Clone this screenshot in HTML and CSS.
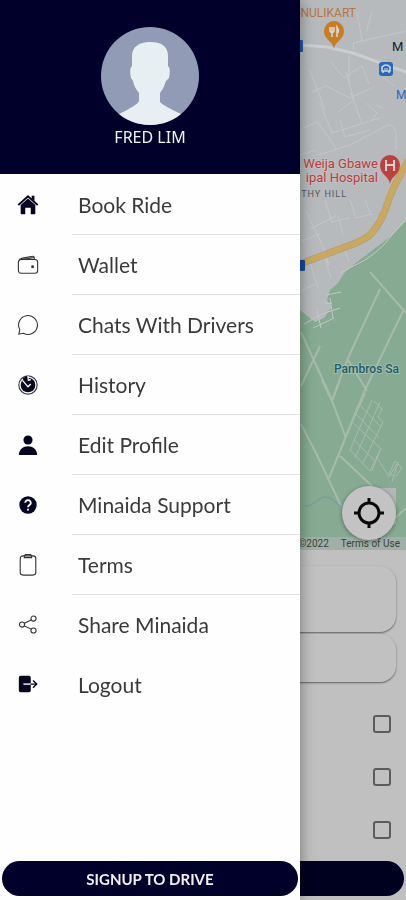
FILE: index.html
```html
<!DOCTYPE html>
<html lang="en">
<head>
    <meta charset="UTF-8">
    <meta name="viewport" content="width=device-width, initial-scale=1.0">
    <title>Minaida</title>

    <link rel="stylesheet" href="styles.css">
</head>
<body>
    <main class="page">
        <div class="map">
            <svg class="map-art" viewBox="0 0 406 550" preserveAspectRatio="xMaxYMin slice">
                <rect width="406" height="550" fill="#b7babc"/>
                <!-- park -->
                <path d="M406 221L390 237L374 249L357 262L345 272L338 283L330 290L327 300L332 307L324 318L315 322L300 310L0 310V550H406Z" fill="#86ab92"/>
                <!-- small streets -->
                <g fill="none" stroke="#c4c7c8" stroke-width="1">
                    <path d="M354 50L353 43L406 31M357 12L362 40M366 32L372 12M303 128L318 122L337 150M312 92L326 86L350 98L372 88M330 61L344 78L362 66L369 84M346 72L354 100L338 112M320 103L332 133L380 118M351 93L362 124M366 103L377 113L372 120M376 105L383 108M340 120L345 137L370 130M310 70L325 110M318 155L350 145L388 125Q396 124 396 136V150M349 55V82M384 78L394 86M300 155L316 150"/>
                    <path d="M302 241L320 234M306 211L324 249L329 266M310 229L336 216M325 200L332 222L350 218M350 200L356 218L372 214M338 216L343 235M365 200L371 215M300 292L315 284M310 262L318 288M325 258L331 278M345 250L349 262"/>
                    <path d="M304 324L322 314L340 308M313 328L334 318M326 295L341 292M324 304L332 303M317 310L321 328M330 298L333 318M340 273L365 260Q382 249 391 236L406 219"/>
                </g>
                <!-- paths in the park -->
                <g fill="none" stroke="#a7bbaa" stroke-width="2">
                    <path d="M370 272L406 313M380 289L348 358L332 400M404 309L365 390L329 478M301 332L332 400M301 386L320 346M347 358L367 391"/>
                    <path d="M322 380L332 401L346 438M332 401L340 380M301 424L317 455L342 508M340 456L372 486M393 520L406 508"/>
                </g>
                <!-- plots -->
                <g fill="none" stroke="#a9baac" stroke-width="1">
                    <path d="M366 393L345 436M372 400L350 450M380 402L355 458M383 422L363 463M381 448L372 471M374 401L382 409L378 417L383 422M360 405L381 427M356 414L379 438M353 423L380 448M354 440L376 462M350 450L370 471L381 448M376 456L389 477L398 462L392 482M389 474L395 461L402 468L396 476Z"/>
                </g>
                <path d="M303 506C314 508 318 496 326 497S337 505 345 509" fill="none" stroke="#7696a6" stroke-width="1"/>
                <!-- main roads -->
                <path d="M300 45L327 47L353 53L406 72" fill="none" stroke="#cbcdce" stroke-width="3"/>
                <path d="M300 264L337 250Q364 241 371 234Q382 222 388 202Q394 184 410 158" fill="none" stroke="#b09b66" stroke-width="7"/>
                <path d="M300 264L337 250Q364 241 371 234Q382 222 388 202Q394 184 410 158" fill="none" stroke="#c8a95f" stroke-width="6"/>
                <rect x="293" y="40" width="10" height="12" rx="1" fill="#2357a8"/>
                <rect x="295" y="260" width="10" height="11" rx="1" fill="#17479a"/>
                <!-- restaurant pin -->
                <path d="M334 49C333 41 324 40 324 31A10 10 0 0 1 344 31C344 40 335 41 334 49Z" fill="#c87d25"/>
                <path d="M330 27V31Q332 34 334 31V27M332 27V37M337 37V27Q339 30 338 33" fill="none" stroke="#dedad2" stroke-width="1.5"/>
                <!-- bus stop -->
                <rect x="379" y="62" width="14" height="14" rx="3" fill="#2c67b8"/>
                <path d="M382 71V67Q386 63 390 67V71ZM383 73V71M389 73V71" fill="none" stroke="#d0d9e6" stroke-width="1.5"/>
                <path d="M384 69H388" stroke="#d0d9e6"/>
                <!-- hospital pin -->
                <path d="M390 184C389 176 380 175 380 165A10 10 0 0 1 400 165C400 175 391 176 390 184Z" fill="#bd4140"/>
                <path d="M386 160V171M394 160V171M386 165H394" stroke="#dfd0d0" stroke-width="2"/>
                <g class="labels">
                    <text class="food" x="356" y="17">NULIKART</text>
                    <text class="health" x="378" y="168">Weija Gbawe</text>
                    <text class="health" x="378" y="182">ipal Hospital</text>
                    <text class="area" x="347" y="197">THY HILL</text>
                    <text class="town" x="392" y="51">M</text>
                    <text class="stop" x="396" y="99">M</text>
                    <text class="park" x="334" y="373">Pambros Sa</text>
                </g>
            </svg>
            <div class="map-corner"></div>
            <div class="map-legal">
                <span>©2022</span>
                <a href="#">Terms of Use</a>
            </div>
            <button class="locate" aria-label="My location">
                <svg width="30" height="30" viewBox="0 0 30 30" fill="none" stroke="#0a0a0a" stroke-width="3">
                    <circle cx="15" cy="15" r="10"/>
                    <path d="M15 0V6M15 24V30M0 15H6M24 15H30"/>
                </svg>
            </button>
        </div>
        <div class="card card-tall"></div>
        <div class="card"></div>
        <div class="options">
            <input type="checkbox" aria-label="Option one">
            <input type="checkbox" aria-label="Option two">
            <input type="checkbox" aria-label="Option three">
        </div>
        <button class="page-button" aria-label="Continue"></button>
    </main>

    <aside class="drawer">
        <header class="profile">
            <svg class="avatar" viewBox="0 0 98 98">
                <defs><clipPath id="round"><circle cx="49" cy="49" r="49"/></clipPath></defs>
                <g clip-path="url(#round)">
                    <rect width="98" height="98" fill="#929bb5"/>
                    <path d="M49 15C60 15 67 19 67 29V39Q70 41 68 51L65 54Q63 61 59 66V75Q61 78 82 88V98H16V88Q37 78 38 74V66Q33 60 32 54L30 51Q28 41 31 39V29C31 20 38 15 49 15Z" fill="#e8eff2"/>
                </g>
            </svg>
            <div class="name">FRED LIM</div>
        </header>

        <nav class="menu">
            <a href="#" class="item">
                <svg class="icon" viewBox="0 0 24 24">
                    <path d="M12 5L20 12V21Q20 22 19 22H15V15H9V22H5Q4 22 4 21V12Z" fill="#05051f"/>
                    <path d="M1.500 12L12 2.500L22.500 12" fill="none" stroke="#05051f" stroke-width="2"/>
                    <path d="M16 2H19V8L16 5Z" fill="#05051f"/>
                </svg>
                <span>Book Ride</span>
            </a>
            <a href="#" class="item">
                <svg class="icon line" viewBox="0 0 24 24">
                    <rect x="1.500" y="6" width="21" height="15" rx="3"/>
                    <path d="M2 7Q3 5 6 4.500L17 2.500Q19 2 19 6M6 6L18 4"/>
                    <circle cx="17" cy="14" r="1" fill="#222"/>
                </svg>
                <span>Wallet</span>
            </a>
            <a href="#" class="item">
                <svg class="icon line" viewBox="0 0 24 24">
                    <path d="M2 22L3 17A10.300 10.300 0 1 1 7 21Z"/>
                </svg>
                <span>Chats With Drivers</span>
            </a>
            <a href="#" class="item">
                <svg class="icon" viewBox="0 0 24 24">
                    <circle cx="12" cy="12" r="10" fill="none" stroke="#444" stroke-width="1.300"/>
                    <circle cx="12" cy="12" r="8" fill="#08081c"/>
                    <path d="M6 7L12 14L15 11M12 2V7L15 6" fill="none" stroke="#fff" stroke-width="1.500"/>
                    <path d="M6 5L12 11L11 2" fill="#08081c"/>
                </svg>
                <span>History</span>
            </a>
            <a href="#" class="item">
                <svg class="icon" viewBox="0 0 24 24" fill="#05051f">
                    <circle cx="12" cy="6.500" r="5"/>
                    <path d="M2 23C2 10 22 10 22 23Z"/>
                </svg>
                <span>Edit Profile</span>
            </a>
            <a href="#" class="item">
                <svg class="icon" viewBox="0 0 24 24">
                    <circle cx="12" cy="12" r="9.500" fill="#05051f"/>
                    <path d="M9 9.500C9 5.500 15.500 6 15 10C15 12 12 12 12 14.500M12 16V18" fill="none" stroke="#fff" stroke-width="2"/>
                </svg>
                <span>Minaida Support</span>
            </a>
            <a href="#" class="item">
                <svg class="icon line" viewBox="0 0 24 24">
                    <rect x="3.500" y="2" width="17" height="21" rx="3"/>
                    <path d="M8 2Q9 0 12 .500Q15 0 16 2V4H8Z"/>
                </svg>
                <span>Terms</span>
            </a>
            <a href="#" class="item plain">
                <svg class="icon line" viewBox="0 0 24 24">
                    <circle cx="5.500" cy="11.500" r="2.800"/>
                    <circle cx="18" cy="5" r="2.800"/>
                    <circle cx="18" cy="18" r="2.800"/>
                    <path d="M8 10L15.500 6.500M8 13L15.500 16.500"/>
                </svg>
                <span>Share Minaida</span>
            </a>
            <a href="#" class="item plain">
                <svg class="icon" viewBox="0 0 24 24">
                    <rect x="2" y="2" width="13" height="18" rx="2" fill="#05051f"/>
                    <path d="M7 11H15" stroke="#fff" stroke-width="1.500"/>
                    <path d="M15 11H21M17.500 7L21.500 11L17.500 15" fill="none" stroke="#05051f" stroke-width="1.500"/>
                </svg>
                <span>Logout</span>
            </a>
        </nav>

        <button class="signup">SIGNUP TO DRIVE</button>
    </aside>
</body>
</html>
```
FILE: styles.css
```css
*{
    margin: 0;
    padding: 0;
    box-sizing: border-box;
}

body{
    min-height: 100vh;
    background-color: #c0c0c0;
    font-family: "Lato", "Open Sans", sans-serif;
}

/* page under the drawer */
.page{
    min-height: 100vh;
    display: flex;
    flex-direction: column;
    padding-bottom: 4px;
    overflow: hidden;
}

.map{
    position: relative;
    height: 550px;
    margin-bottom: 16px;
    overflow: hidden;
}

.map-art{
    display: block;
    width: 100%;
    height: 100%;
}

.labels{
    font-family: Roboto, sans-serif;
    font-size: 13px;
}

.food{
    fill: #b57740;
    font-size: 12px;
    text-anchor: end;
}

.health{
    fill: #b43f42;
    stroke: #c4c0c1;
    stroke-width: 2px;
    paint-order: stroke;
    text-anchor: end;
}

.area{
    fill: #55595c;
    font-size: 9px;
    letter-spacing: 1px;
    text-anchor: end;
}

.town{
    fill: #1c1c1c;
}

.stop{
    fill: #2c67b8;
    font-size: 12px;
}

.park{
    fill: #205d65;
    stroke: #a3bdae;
    stroke-width: 2px;
    paint-order: stroke;
    font-size: 12px;
    font-weight: 500;
}

.map-corner{
    position: absolute;
    right: 10px;
    bottom: 26px;
    width: 27px;
    height: 36px;
    background-color: #b2b8b5;
}

.map-legal{
    position: absolute;
    right: 0;
    bottom: 0;
    left: 0;
    display: flex;
    justify-content: flex-end;
    gap: 12px;
    padding-right: 6px;
    background-color: #a0b0a7;
    font-family: Roboto, sans-serif;
    font-size: 10px;
    line-height: 13px;
    color: #39423d;
}

.map-legal a{
    color: #39423d;
    text-decoration: none;
}

.locate{
    position: absolute;
    right: 10px;
    bottom: 10px;
    width: 54px;
    height: 54px;
    display: flex;
    align-items: center;
    justify-content: center;
    border: none;
    border-radius: 50%;
    background-color: #c3c3c3;
    box-shadow: 0 1px 4px rgba(0, 0, 0, 0.4);
}

.card{
    height: 48px;
    margin: 0 10px 2px;
    border-radius: 16px;
    background-color: #c1c1c1;
    box-shadow: 0 1px 2px rgba(0, 0, 0, 0.5);
}

.card-tall{
    height: 66px;
}

.options{
    display: flex;
    flex-direction: column;
    align-items: flex-end;
    gap: 35px;
    padding: 31px 15px 16px;
}

.options input{
    appearance: none;
    width: 18px;
    height: 18px;
    border: 2px solid #5c5c5c;
    border-radius: 3px;
}

.page-button{
    height: 35px;
    margin: auto 2px 0;
    border: none;
    border-radius: 18px;
    background-color: #00001f;
}

/* side drawer */
.drawer{
    position: fixed;
    top: 0;
    bottom: 0;
    left: 0;
    width: 300px;
    display: flex;
    flex-direction: column;
    background-color: #fefefe;
    box-shadow: 0 0 14px rgba(0, 0, 0, 0.4);
}

.profile{
    height: 174px;
    display: flex;
    flex-direction: column;
    align-items: center;
    padding-top: 27px;
    background-color: #00002a;
}

.avatar{
    width: 98px;
    height: 98px;
}

.name{
    font-family: "Noto Sans", sans-serif;
    font-size: 16px;
    line-height: 24px;
    color: #f2f2f2;
}

.item{
    height: 60px;
    display: flex;
    align-items: center;
    padding-top: 1px;
    padding-left: 17px;
    color: #3a3a3a;
    font-size: 21px;
    text-decoration: none;
}

.icon{
    width: 22px;
    height: 22px;
    flex: none;
}

.line{
    fill: none;
    stroke: #333;
    stroke-width: 1.2;
}

.item span{
    flex: 1;
    height: 60px;
    margin-left: 33px;
    padding-left: 6px;
    line-height: 60px;
    border-bottom: 1px solid #e2e2e2;
}

.plain span{
    border-bottom: none;
}

.signup{
    height: 35px;
    margin: auto 2px 4px;
    border: none;
    border-radius: 18px;
    background-color: #00002a;
    color: #f0f0f0;
    font-family: "Lato", sans-serif;
    font-size: 15px;
    font-weight: bold;
}
```
